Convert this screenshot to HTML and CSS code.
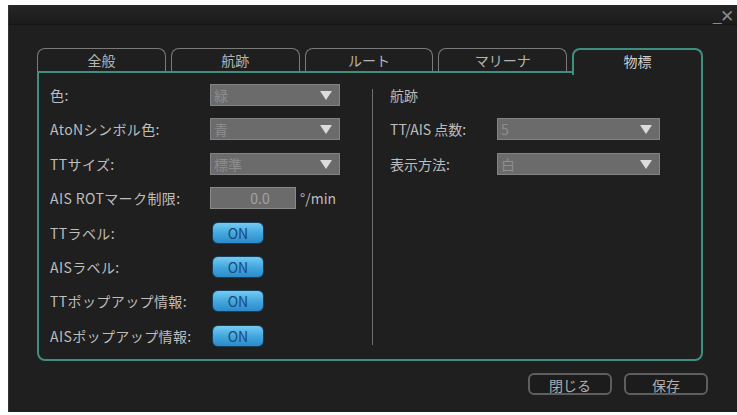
FILE: index.html
```html
<!DOCTYPE html>
<html lang="ja">
  <head>
    <meta charset="UTF-8" />
    <title>物標設定</title>
    <link rel="stylesheet" href="styles.css">
  </head>
  <body>
    <div class="window">
      <div class="titlebar">
        <span class="winctl">_✕</span>
      </div>
      <div class="dialog">
        <div class="tabs">
          <div class="tab">全般</div>
          <div class="tab">航跡</div>
          <div class="tab">ルート</div>
          <div class="tab">マリーナ</div>
          <div class="tab active">物標</div>
        </div>
        <div class="panel">
          <div class="col left">
            <div class="row">
              <label>色:</label>
              <div class="select">緑<span class="arrow"></span></div>
            </div>
            <div class="row">
              <label>AtoNシンボル色:</label>
              <div class="select">青<span class="arrow"></span></div>
            </div>
            <div class="row">
              <label>TTサイズ:</label>
              <div class="select">標準<span class="arrow"></span></div>
            </div>
            <div class="row">
              <label>AIS ROTマーク制限:</label>
              <div class="numbox">0.0</div>
              <span class="unit">°/min</span>
            </div>
            <div class="row">
              <label>TTラベル:</label>
              <button class="toggle">ON</button>
            </div>
            <div class="row">
              <label>AISラベル:</label>
              <button class="toggle">ON</button>
            </div>
            <div class="row">
              <label>TTポップアップ情報:</label>
              <button class="toggle">ON</button>
            </div>
            <div class="row">
              <label>AISポップアップ情報:</label>
              <button class="toggle">ON</button>
            </div>
          </div>
          <div class="divider"></div>
          <div class="col right">
            <div class="row">
              <span class="heading">航跡</span>
            </div>
            <div class="row">
              <label>TT/AIS 点数:</label>
              <div class="select wide">5<span class="arrow"></span></div>
            </div>
            <div class="row">
              <label>表示方法:</label>
              <div class="select wide">白<span class="arrow"></span></div>
            </div>
          </div>
        </div>
        <div class="actions">
          <button class="btn">閉じる</button>
          <button class="btn">保存</button>
        </div>
      </div>
    </div>
  </body>
</html>
```

FILE: styles.css
```css
body {
  margin: 0;
  background: #fff;
  font-family: "Noto Sans CJK JP", "Noto Sans", sans-serif;
  font-size: 14px;
  color: #bdbdbd;
}
.window {
  margin: 5px 0 0 8px;
  height: 407px;
  background: #1f1f1f;
  border-left: 1px solid #333;
  box-sizing: border-box;
}
.titlebar {
  height: 19px;
  background: linear-gradient(#262626, #1b1b1b);
  border-bottom: 1px solid #151515;
  display: flex;
  justify-content: flex-end;
  align-items: center;
  padding-right: 5px;
}
.winctl {
  color: #8a8a8a;
  font-size: 17px;
  letter-spacing: -2px;
}
.dialog {
  padding: 23px 0 0 28px;
  width: 666px;
}
.tabs {
  display: flex;
  gap: 5px;
  height: 23px;
}
.tab {
  flex: 1;
  border: 1px solid #7a7a7a;
  border-bottom: none;
  border-radius: 8px 8px 0 0;
  text-align: center;
  line-height: 22px;
  color: #b4b4b4;
}
.tab.active {
  border: 2px solid #3f8f80;
  border-bottom: none;
  background: #1f1f1f;
  position: relative;
  z-index: 1;
  height: 25px;
  color: #cfcfcf;
}
.panel {
  border: 2px solid #3f8f80;
  border-radius: 0 0 8px 8px;
  height: 275px;
  display: flex;
  padding: 11px 0 0 11px;
}
.col {
  display: flex;
  flex-direction: column;
  gap: 12.4px;
}
.col.left {
  width: 322px;
}
.row {
  display: flex;
  align-items: center;
  height: 22px;
}
.left label {
  width: 160px;
  letter-spacing: 0.4px;
}
.right label {
  width: 107px;
}
.heading {
  color: #b8b8b8;
}
.divider {
  width: 1px;
  background: #6e6e6e;
  margin: 5px 17px 14px 0;
}
.select {
  width: 130px;
  height: 22px;
  box-sizing: border-box;
  background: #6b6b6b;
  border: 1px solid #838383;
  color: #8e8e8e;
  padding-left: 3px;
  line-height: 20px;
  position: relative;
}
.select.wide {
  width: 163px;
}
.arrow {
  position: absolute;
  right: 7px;
  top: 6px;
  border-left: 6px solid transparent;
  border-right: 6px solid transparent;
  border-top: 9px solid #dcdcdc;
}
.numbox {
  width: 86px;
  height: 22px;
  box-sizing: border-box;
  background: #6b6b6b;
  border: 1px solid #8a8a8a;
  color: #a2a2a2;
  text-align: center;
  padding-left: 14px;
  line-height: 20px;
}
.unit {
  margin-left: 4px;
}
.toggle {
  margin-left: 2px;
  width: 52px;
  height: 22px;
  border: 1px solid #163f5c;
  border-radius: 6px;
  background: linear-gradient(#74ccf2, #44a8df 50%, #2c8bcb);
  color: #1c4a74;
  font-family: inherit;
  font-size: 14px;
  padding: 0;
}
.actions {
  display: flex;
  justify-content: flex-end;
  gap: 12px;
  margin-top: 12px;
  margin-right: -5px;
}
.btn {
  width: 84px;
  height: 22px;
  background: #1c1c1c;
  border: 2px solid #5e5e5e;
  border-radius: 6px;
  color: #aeaeae;
  font-family: inherit;
  font-size: 14px;
  padding: 0;
}
```
